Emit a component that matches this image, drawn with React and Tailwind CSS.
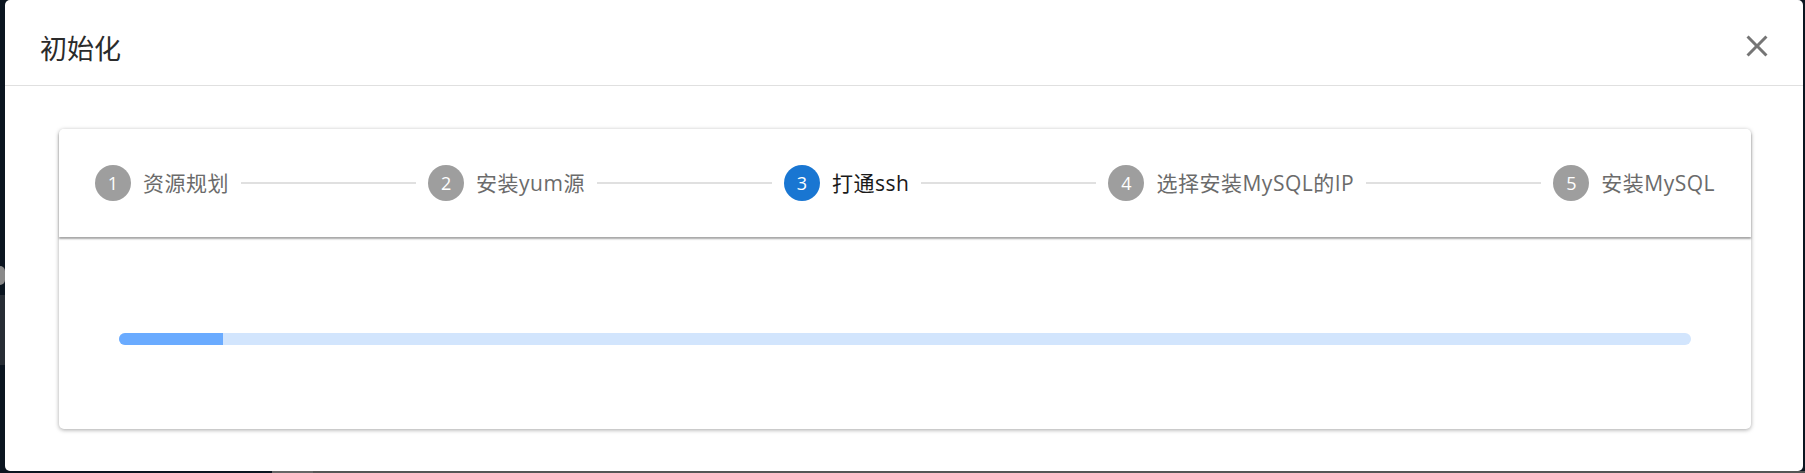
import React from "react";

const steps = [
  { n: 1, label: "资源规划" },
  { n: 2, label: "安装yum源" },
  { n: 3, label: "打通ssh", active: true },
  { n: 4, label: "选择安装MySQL的IP" },
  { n: 5, label: "安装MySQL" },
];

function Step({ step }) {
  return (
    <div className="flex items-center px-[12px]">
      <div
        className={
          "flex h-[36px] w-[36px] items-center justify-center rounded-full text-[18px] text-white " +
          (step.active ? "bg-[#1976d2]" : "bg-[#9e9e9e]")
        }
      >
        {step.n}
      </div>
      <span
        className={
          "ml-[12px] whitespace-nowrap text-[21px] leading-[24px] tracking-[0.5px] " +
          (step.active ? "text-[#1a1a1a]" : "text-[#6b6b6b]")
        }
      >
        {step.label}
      </span>
    </div>
  );
}

export default function App() {
  return (
    <div className="flex h-[473px] w-[1805px] flex-col overflow-hidden bg-[#0b1520] font-['Open_Sans','Noto_Sans_CJK_SC',sans-serif]">
      <div className="flex h-[471px]">
        {/* backdrop strip on the left */}
        <div className="flex w-[5px] flex-col">
          <div className="h-[266px]" />
          <div className="h-[19px] rounded-r-full bg-[#8a8a8a]" />
          <div className="h-[10px]" />
          <div className="h-[70px] bg-[#272d35]" />
        </div>

        <div className="flex flex-1 flex-col rounded-[5px] bg-white">
          <div className="flex h-[86px] items-start justify-between border-b border-[#e0e0e0]">
            <h2 className="ml-[35px] mt-[34px] font-['Noto_Sans_CJK_SC',sans-serif] text-[27px] leading-[27px] text-[#2b2b2b]">
              初始化
            </h2>
            <svg className="mr-[28px] mt-[28px] h-[36px] w-[36px]" viewBox="0 0 24 24" fill="#757575">
              <path d="M19 6.41 17.59 5 12 10.59 6.41 5 5 6.41 10.59 12 5 17.59 6.41 19 12 13.41 17.59 19 19 17.59 13.41 12z" />
            </svg>
          </div>

          <div className="pl-[54px] pr-[52px] pt-[43px]">
            <div className="rounded-[5px] bg-white shadow-[0_1px_4px_rgba(0,0,0,0.35)]">
              <div className="flex items-center rounded-t-[5px] bg-white px-[24px] py-[36px] shadow-[0_2px_2px_rgba(0,0,0,0.35)]">
                {steps.map((s, i) => (
                  <React.Fragment key={s.n}>
                    <Step step={s} />
                    {i < steps.length - 1 && <div className="h-[1.5px] flex-1 bg-[#e0e0e0]" />}
                  </React.Fragment>
                ))}
              </div>
              <div className="px-[60px] pb-[84px] pt-[96px]">
                <div className="flex h-[12px] overflow-hidden rounded-[6px] bg-[#d2e5fd]">
                  <div className="w-[6.6%] bg-[#6aabff]" />
                </div>
              </div>
            </div>
          </div>
        </div>

        <div className="w-[2px]" />
      </div>
      <div className="flex h-[2px]">
        <div className="w-[272px]" />
        <div className="w-[41px] bg-[#666]" />
        <div className="flex-1 bg-[#555]" />
      </div>
    </div>
  );
}
